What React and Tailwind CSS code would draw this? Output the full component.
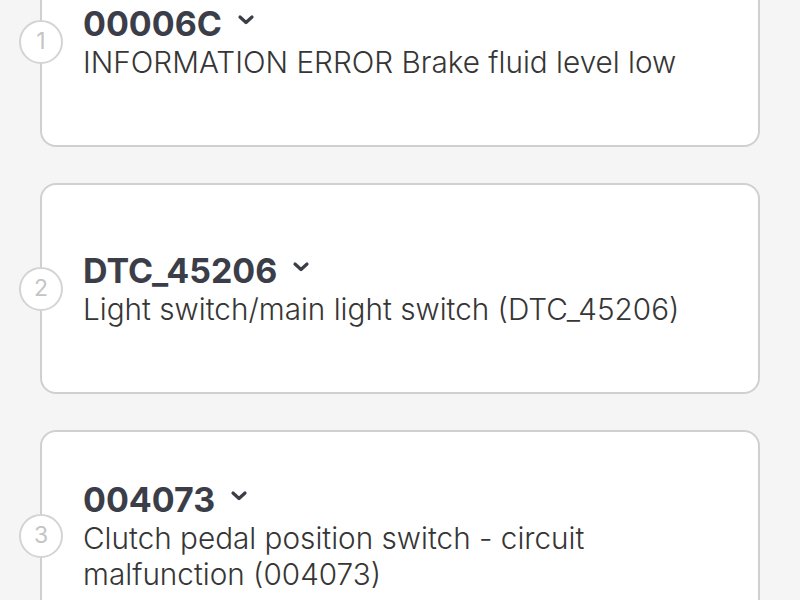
const faults = [
    { id: 1, code: "00006C", text: "INFORMATION ERROR Brake fluid level low" },
    { id: 2, code: "DTC_45206", text: "Light switch/main light switch (DTC_45206)" },
    { id: 3, code: "004073", text: "Clutch pedal position switch - circuit malfunction (004073)" },
];

const Chevron = () => (
    <svg width="18" height="12" viewBox="0 0 18 12" className="ml-[15px] -mt-[8px]">
        <path d="M3 3 L9 8.5 L15 3" fill="none" stroke="#3b3e48" strokeWidth="3.2" strokeLinecap="round" strokeLinejoin="round" />
    </svg>
);

const FaultCard = ({ fault }) => (
    <div className="relative min-h-[211px] rounded-[16px] border-2 border-[#d0d0d0] bg-white flex items-center pl-[41px] pr-[30px] py-[20px]">
        <div className="absolute left-[-23px] top-1/2 -translate-y-1/2 w-[44px] h-[44px] rounded-full border-2 border-[#d4d4d4] bg-white flex items-center justify-center text-[23px] text-[#c4c4c4]">
            {fault.id}
        </div>
        <div>
            <div className="flex items-center">
                <span className="text-[34px] leading-[40px] font-bold text-[#3b3e48]">{fault.code}</span>
                <Chevron />
            </div>
            <p className="text-[29.7px] leading-[36px] font-light text-[#363636]">{fault.text}</p>
        </div>
    </div>
);

export default function App() {
    return (
        <div className="w-[800px] h-[600px] overflow-hidden bg-[#f5f5f5]" style={{ fontFamily: "Inter, 'Noto Sans', sans-serif" }}>
            <div className="flex flex-col gap-[36px] px-[40px] -mt-[64px]">
                {faults.map(fault => (
                    <FaultCard key={fault.id} fault={fault} />
                ))}
            </div>
        </div>
    );
}
